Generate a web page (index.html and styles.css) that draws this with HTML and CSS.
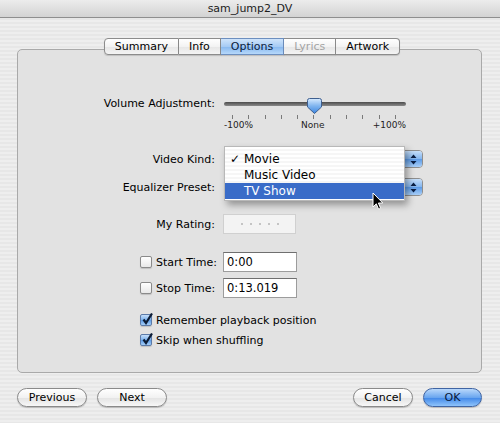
FILE: index.html
```html
<!DOCTYPE html>
<html lang="en">
<head>
    <meta charset="UTF-8">
    <title>sam_jump2_DV</title>
    <link rel="stylesheet" href="styles.css">
</head>
<body>
<div class="window">
    <div class="titlebar">sam_jump2_DV</div>
    <div class="content">
        <div class="tabs">
            <div class="tab">Summary</div>
            <div class="tab">Info</div>
            <div class="tab selected">Options</div>
            <div class="tab disabled">Lyrics</div>
            <div class="tab">Artwork</div>
        </div>
        <div class="panel">
            <div class="form">
                <div class="row row-volume">
                    <div class="label label-top">Volume Adjustment:</div>
                    <div class="slider">
                        <div class="track"></div>
                        <svg class="thumb" width="15" height="16" viewBox="0 0 15 16">
                            <defs>
                                <linearGradient id="tg" x1="0" y1="0" x2="0" y2="1">
                                    <stop offset="0" stop-color="#d8ebff"/>
                                    <stop offset="0.5" stop-color="#7fb4ef"/>
                                    <stop offset="1" stop-color="#3d86e0"/>
                                </linearGradient>
                            </defs>
                            <path d="M2.5 0.5 H12.5 Q14.5 0.5 14.5 2.5 V9 L7.5 15.5 L0.5 9 V2.5 Q0.5 0.5 2.5 0.5 Z" fill="url(#tg)" stroke="#3f5f8f"/>
                        </svg>
                        <div class="ticks">
                            <span></span><span></span><span></span><span></span><span></span><span></span>
                            <span></span><span></span><span></span><span></span><span></span>
                        </div>
                        <div class="scale">
                            <span>-100%</span><span>None</span><span>+100%</span>
                        </div>
                    </div>
                </div>

                <!-- popup buttons: their titles are hidden under the open menu -->
                <div class="row row-kind">
                    <div class="label">Video Kind:</div>
                    <div class="popup">
                        <span class="popup-arrows">
                            <svg width="7" height="11" viewBox="0 0 7 11"><path d="M3.5 0.5 L6.5 4 H0.5 Z M0.5 7 H6.5 L3.5 10.5 Z" fill="#0b1f44"/></svg>
                        </span>
                    </div>
                </div>

                <div class="row row-eq">
                    <div class="label">Equalizer Preset:</div>
                    <div class="popup">
                        <span class="popup-arrows">
                            <svg width="7" height="11" viewBox="0 0 7 11"><path d="M3.5 0.5 L6.5 4 H0.5 Z M0.5 7 H6.5 L3.5 10.5 Z" fill="#0b1f44"/></svg>
                        </span>
                    </div>
                </div>

                <div class="row row-rating">
                    <div class="label">My Rating:</div>
                    <div class="rating">
                        <span></span><span></span><span></span><span></span><span></span>
                    </div>
                </div>

                <div class="row row-start">
                    <label class="checkline"><span class="box"></span>Start Time:</label>
                    <div class="field">0:00</div>
                </div>

                <div class="row row-stop">
                    <label class="checkline"><span class="box"></span>Stop Time:</label>
                    <div class="field">0:13.019</div>
                </div>

                <label class="checkline option option-first">
                    <span class="box checked">
                        <svg width="13" height="13" viewBox="0 0 13 13"><path d="M2.5 6.5 L5 10 L11 0.5" fill="none" stroke="#0d1d36" stroke-width="2.2"/></svg>
                    </span>Remember playback position
                </label>
                <label class="checkline option">
                    <span class="box checked">
                        <svg width="13" height="13" viewBox="0 0 13 13"><path d="M2.5 6.5 L5 10 L11 0.5" fill="none" stroke="#0d1d36" stroke-width="2.2"/></svg>
                    </span>Skip when shuffling
                </label>
            </div>

            <!-- open popup menu for Video Kind -->
            <div class="menu">
                <div class="menu-item"><span class="mark">&#10003;</span>Movie</div>
                <div class="menu-item"><span class="mark"></span>Music Video</div>
                <div class="menu-item active"><span class="mark"></span>TV Show</div>
            </div>
        </div>

        <div class="footer">
            <div class="btn-group">
                <div class="btn">Previous</div>
                <div class="btn">Next</div>
            </div>
            <div class="btn-group">
                <div class="btn btn-cancel">Cancel</div>
                <div class="btn btn-ok">OK</div>
            </div>
        </div>
    </div>

    <svg class="cursor" width="12" height="19" viewBox="0 0 12 19">
        <path d="M1 1 V15 L4.3 11.8 L6.6 17.2 L8.6 16.3 L6.4 11 H10.8 Z" fill="#000" stroke="#fff" stroke-width="1" stroke-linejoin="round"/>
    </svg>
</div>
</body>
</html>
```

FILE: styles.css
```css
* {
    box-sizing: border-box;
}
body {
    margin: 0;
    padding: 0;
    font-family: "DejaVu Sans", "Lucida Grande", sans-serif;
    font-size: 11px;
    color: #000;
}
.window {
    position: relative;
    width: 500px;
    height: 423px;
    overflow: hidden;
    background: repeating-linear-gradient(#eeeeee 0 2px, #e7e7e7 2px 4px);
}
.titlebar {
    height: 18px;
    line-height: 17px;
    text-align: center;
    color: #1c1c1c;
    background: linear-gradient(#ececec, #d3d3d3);
    border-bottom: 1px solid #8e8e8e;
}
.content {
    padding-top: 20px;
}
.tabs {
    position: relative;
    z-index: 1;
    display: flex;
    justify-content: center;
    height: 17px;
    margin-left: 4px;
}
.tab {
    padding: 0 10px;
    line-height: 15px;
    background: linear-gradient(#ffffff, #f3f3f3 50%, #e6e6e6 51%, #f4f4f4);
    border: 1px solid #8c8c8c;
    border-left: none;
    box-shadow: 0 1px 1px rgba(0,0,0,0.15);
}
.tab:first-child {
    border-left: 1px solid #8c8c8c;
    border-radius: 4px 0 0 4px;
}
.tab:last-child {
    border-radius: 0 4px 4px 0;
}
.tab.selected {
    color: #0a1c3e;
    background: linear-gradient(#cfe4fb, #a6cbf4 50%, #86b7ee 51%, #b6d8fb);
    border-color: #6d8fbf;
}
.tab.disabled {
    color: #a4a4a4;
}
.panel {
    position: relative;
    height: 324px;
    margin: -6px 18px 0 17px;
    padding-top: 46px;
    background: #e2e2e2;
    border: 1px solid #a9a9a9;
    border-radius: 5px;
}
.form {
    display: flex;
    flex-direction: column;
}
.row {
    display: grid;
    grid-template-columns: 197px 1fr;
    column-gap: 8px;
    align-items: center;
}
.label {
    text-align: right;
}
.label-top {
    align-self: start;
    margin-top: 1px;
    line-height: 14px;
}
.row-volume {
    height: 36px;
}
.row-kind {
    margin-top: 18px;
    height: 18px;
}
.row-eq {
    margin-top: 10px;
    height: 18px;
}
.row-rating {
    margin-top: 18px;
    height: 20px;
}
.row-start {
    margin-top: 18px;
    height: 20px;
}
.row-stop {
    margin-top: 6px;
    height: 20px;
}

/* slider */
.slider {
    position: relative;
    width: 182px;
    margin-left: 1px;
    align-self: start;
}
.track {
    height: 4px;
    margin-top: 6px;
    border-radius: 2px;
    background: linear-gradient(#4c4c4c, #8a8a8a);
}
.thumb {
    position: absolute;
    left: 83px;
    top: 2px;
}
.ticks {
    display: flex;
    justify-content: space-between;
    height: 4px;
    margin-top: 9px;
    padding: 0 10px 0 8px;
}
.ticks span {
    width: 1px;
    background: #7a7a7a;
}
.scale {
    display: flex;
    justify-content: space-between;
    margin-top: 1px;
    font-size: 9px;
    line-height: 11px;
    color: #222;
}

/* popup buttons */
.popup {
    display: flex;
    justify-content: flex-end;
    width: 199px;
    height: 18px;
    margin-left: 1px;
    border: 1px solid #8e8e8e;
    border-radius: 4px;
    background: linear-gradient(#ffffff, #f1f1f1 50%, #e4e4e4 51%, #f6f6f6);
    overflow: hidden;
}
.popup-arrows {
    display: flex;
    align-items: center;
    justify-content: center;
    width: 18px;
    background: linear-gradient(#c5def9, #83b5ee 50%, #5c9ae6 51%, #a7cef8);
    border-left: 1px solid #6b8ebf;
}

/* rating */
.rating {
    display: flex;
    align-items: center;
    justify-content: center;
    gap: 7px;
    width: 73px;
    height: 20px;
    background: #f3f3f3;
    border: 1px solid #d0d0d0;
}
.rating span {
    width: 2px;
    height: 2px;
    background: #c4c4c4;
}

/* checkboxes & fields */
.checkline {
    display: flex;
    align-items: center;
    gap: 4px;
    padding-left: 122px;
    white-space: nowrap;
}
.box {
    position: relative;
    flex: none;
    width: 12px;
    height: 12px;
    border: 1px solid #8a8a8a;
    border-radius: 2px;
    background: linear-gradient(#ffffff, #e8e8e8);
    box-shadow: 0 1px 1px rgba(0,0,0,0.15);
}
.box.checked {
    background: linear-gradient(#c6dffa, #78afec 50%, #5b9be6 51%, #a4cdf7);
    border-color: #5b7aa8;
}
.box svg {
    position: absolute;
    left: 0;
    top: -2px;
}
.field {
    width: 74px;
    height: 20px;
    padding-left: 3px;
    line-height: 18px;
    background: #fff;
    border: 1px solid #9c9c9c;
    border-top-color: #6f6f6f;
    font-size: 11.5px;
}
.option {
    height: 16px;
    margin-top: 4px;
}
.option-first {
    margin-top: 14px;
}

/* open menu */
.menu {
    position: absolute;
    left: 206px;
    top: 96px;
    width: 181px;
    height: 55px;
    padding: 4px 0 3px;
    background: repeating-linear-gradient(#ffffff 0 2px, #f6f6f6 2px 4px);
    border: 1px solid #b8b8b8;
    box-shadow: 3px 4px 7px rgba(0,0,0,0.35);
    font-size: 12px;
}
.menu-item {
    display: flex;
    height: 16px;
    line-height: 16px;
    padding-left: 5px;
}
.menu-item .mark {
    width: 14px;
}
.menu-item.active {
    color: #fff;
    background: #3a6cc8;
}

/* footer buttons */
.footer {
    display: flex;
    justify-content: space-between;
    margin: 15px 18px 0 17px;
}
.btn-group {
    display: flex;
    gap: 10px;
}
.btn {
    width: 70px;
    height: 19px;
    line-height: 17px;
    text-align: center;
    border: 1px solid #8a8a8a;
    border-radius: 10px;
    background: linear-gradient(#ffffff, #f2f2f2 50%, #e3e3e3 51%, #f7f7f7);
    box-shadow: 0 1px 1px rgba(0,0,0,0.2);
}
.btn-cancel {
    width: 60px;
}
.btn-ok {
    width: 59px;
    color: #08183a;
    border-color: #3f64a3;
    background: linear-gradient(#b9d8fb, #6aa6ef 50%, #3f86e8 51%, #8fc4fb);
}
.cursor {
    position: absolute;
    left: 372px;
    top: 192px;
}
```
